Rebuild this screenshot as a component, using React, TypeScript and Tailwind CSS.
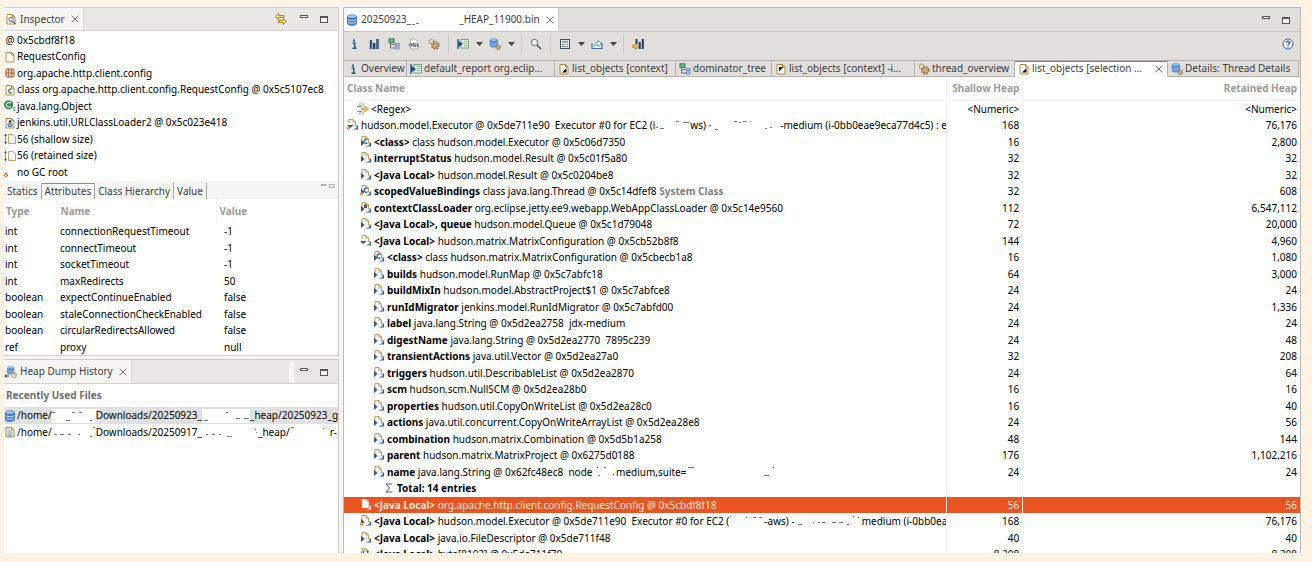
import type { ReactNode } from 'react';
import clsx from 'clsx';

type Mark = [x: number, y: number, w: number];
type Part = string | { mask: number; marks: Mark[] };
type NodeKind = 'object' | 'class' | 'loader' | 'array';

interface TreeRow {
  level: 0 | 1 | 2;
  kind?: NodeKind;
  open?: boolean;
  root?: boolean;
  selected?: boolean;
  field?: string;
  parts: Part[];
  note?: string;
  shallow: string;
  retained: string;
}

const treeRows: TreeRow[] = [
  {
    level: 0, open: true, root: true, shallow: '168', retained: '76,176',
    parts: [
      'hudson.model.Executor @ 0x5de711e90  Executor #0 for EC2 (i',
      { mask: 35, marks: [[1, 9, 2], [5, 10, 4], [21, 3, 3], [28, 4, 6]] },
      'ws) ·',
      { mask: 69, marks: [[4, 11, 3], [23, 3, 3], [28, 4, 2], [32, 3, 3], [39, 3, 1], [54, 10, 2], [59, 9, 2]] },
      '-medium (i-0bb0eae9eca77d4c5) : e',
    ],
  },
  { level: 1, kind: 'class', field: '<class>', parts: ['class hudson.model.Executor @ 0x5c06d7350'], shallow: '16', retained: '2,800' },
  { level: 1, field: 'interruptStatus', parts: ['hudson.model.Result @ 0x5c01f5a80'], shallow: '32', retained: '32' },
  { level: 1, field: '<Java Local>', parts: ['hudson.model.Result @ 0x5c0204be8'], shallow: '32', retained: '32' },
  { level: 1, kind: 'class', root: true, field: 'scopedValueBindings', parts: ['class java.lang.Thread @ 0x5c14dfef8'], note: 'System Class', shallow: '32', retained: '608' },
  { level: 1, kind: 'loader', field: 'contextClassLoader', parts: ['org.eclipse.jetty.ee9.webapp.WebAppClassLoader @ 0x5c14e9560'], shallow: '112', retained: '6,547,112' },
  { level: 1, field: '<Java Local>, queue', parts: ['hudson.model.Queue @ 0x5c1d79048'], shallow: '72', retained: '20,000' },
  { level: 1, open: true, field: '<Java Local>', parts: ['hudson.matrix.MatrixConfiguration @ 0x5cb52b8f8'], shallow: '144', retained: '4,960' },
  { level: 2, kind: 'class', field: '<class>', parts: ['class hudson.matrix.MatrixConfiguration @ 0x5cbecb1a8'], shallow: '16', retained: '1,080' },
  { level: 2, field: 'builds', parts: ['hudson.model.RunMap @ 0x5c7abfc18'], shallow: '64', retained: '3,000' },
  { level: 2, field: 'buildMixIn', parts: ['hudson.model.AbstractProject$1 @ 0x5c7abfce8'], shallow: '24', retained: '24' },
  { level: 2, field: 'runIdMigrator', parts: ['jenkins.model.RunIdMigrator @ 0x5c7abfd00'], shallow: '24', retained: '1,336' },
  { level: 2, field: 'label', parts: ['java.lang.String @ 0x5d2ea2758  jdx-medium'], shallow: '24', retained: '24' },
  { level: 2, field: 'digestName', parts: ['java.lang.String @ 0x5d2ea2770  7895c239'], shallow: '24', retained: '48' },
  { level: 2, field: 'transientActions', parts: ['java.util.Vector @ 0x5d2ea27a0'], shallow: '32', retained: '208' },
  { level: 2, field: 'triggers', parts: ['hudson.util.DescribableList @ 0x5d2ea2870'], shallow: '24', retained: '64' },
  { level: 2, field: 'scm', parts: ['hudson.scm.NullSCM @ 0x5d2ea28b0'], shallow: '16', retained: '16' },
  { level: 2, field: 'properties', parts: ['hudson.util.CopyOnWriteList @ 0x5d2ea28c0'], shallow: '16', retained: '40' },
  { level: 2, field: 'actions', parts: ['java.util.concurrent.CopyOnWriteArrayList @ 0x5d2ea28e8'], shallow: '24', retained: '56' },
  { level: 2, field: 'combination', parts: ['hudson.matrix.Combination @ 0x5d5b1a258'], shallow: '48', retained: '144' },
  { level: 2, field: 'parent', parts: ['hudson.matrix.MatrixProject @ 0x6275d0188'], shallow: '176', retained: '1,102,216' },
  {
    level: 2, field: 'name', shallow: '24', retained: '24',
    parts: [
      'java.lang.String @ 0x62fc48ec8  node ',
      { mask: 21, marks: [[2, 2, 1], [3, 10, 2], [9, 2, 2], [18, 9, 1]] },
      'medium,suite=',
      { mask: 90, marks: [[2, 2, 6], [78, 10, 5], [87, 2, 1]] },
    ],
  },
];

const tailRows: TreeRow[] = [
  { level: 1, selected: true, field: '<Java Local>', parts: ['org.apache.http.client.config.RequestConfig @ 0x5cbdf8f18'], shallow: '56', retained: '56' },
  {
    level: 1, root: true, field: '<Java Local>', shallow: '168', retained: '76,176',
    parts: [
      'hudson.model.Executor @ 0x5de711e90  Executor #0 for EC2 (',
      { mask: 35, marks: [[1, 2, 1], [17, 3, 1], [24, 3, 3], [30, 3, 3]] },
      '-aws) -',
      { mask: 67, marks: [[3, 10, 4], [18, 8, 1], [23, 8, 2], [27, 8, 3], [37, 8, 4], [44, 8, 4], [52, 10, 2], [58, 2, 1], [63, 3, 1]] },
      'medium (i-0bb0ea',
    ],
  },
  { level: 1, field: '<Java Local>', parts: ['java.io.FileDescriptor @ 0x5de711f48'], shallow: '40', retained: '40' },
  { level: 1, kind: 'array', field: '<Java Local>', parts: ['byte[8192] @ 0x5de711f70'], shallow: '8,208', retained: '8,208' },
];

const attributes = [
  ['int', 'connectionRequestTimeout', '-1'],
  ['int', 'connectTimeout', '-1'],
  ['int', 'socketTimeout', '-1'],
  ['int', 'maxRedirects', '50'],
  ['boolean', 'expectContinueEnabled', 'false'],
  ['boolean', 'staleConnectionCheckEnabled', 'false'],
  ['boolean', 'circularRedirectsAllowed', 'false'],
  ['ref', 'proxy', 'null'],
];

/* ---------- icons, all on a 12px grid ---------- */

const Icon = ({ children, size = 12 }: { children: ReactNode; size?: number }) => (
  <svg width={size} height={size} viewBox="0 0 12 12" fill="none" className="shrink-0" aria-hidden="true">
    {children}
  </svg>
);

const Page = ({ fill = '#fdfdf6' }: { fill?: string }) => (
  <path d="M2 1.5h5.5L10 4v7H2z M7.5 1.5V4H10" fill={fill} stroke="#b08d3c" />
);

const Cylinder = () => (
  <>
    <path d="M1.5 2.5v7c0 2.4 9 2.4 9 0v-7z" fill="#3f83d6" />
    <ellipse cx="6" cy="2.5" rx="4.5" ry="1.7" fill="#a9d0f7" stroke="#2f6cb8" strokeWidth=".7" />
    <path d="M1.5 5c0 2.2 9 2.2 9 0M1.5 7.5c0 2.2 9 2.2 9 0" stroke="#d6e9fc" strokeWidth=".9" />
    <path d="M1.5 2.5v7c0 2.4 9 2.4 9 0v-7" stroke="#2f6cb8" strokeWidth=".8" />
  </>
);

const DatabaseIcon = () => <Icon><Cylinder /></Icon>;

const InspectorIcon = () => (
  <Icon>
    <Page />
    <circle cx="6" cy="6.5" r="2.2" fill="#d9ecf7" stroke="#51616e" strokeWidth=".9" />
    <path d="M7.6 8.2l2.8 2.8" stroke="#555" strokeWidth="1.1" />
  </Icon>
);

const PageIcon = () => <Icon><Page /></Icon>;

const PackageIcon = () => (
  <Icon>
    <rect x="2" y="2" width="8" height="8" rx="1" fill="#efc4a3" stroke="#a8623a" />
    <path d="M4.500 1.500v9M7.500 1.500v9M1.500 6h9" stroke="#a8623a" strokeWidth=".8" />
  </Icon>
);

const ClassIcon = () => (
  <Icon>
    <Page />
    <path d="M7.8 5.4a2 2 0 1 0 0 3.2" stroke="#2766b5" strokeWidth="1.2" />
  </Icon>
);

const SuperclassIcon = () => (
  <Icon>
    <circle cx="4.600" cy="4.800" r="4.600" fill="#2f9150" />
    <path d="M6.600 3.300a2.400 2.400 0 1 0 0 3" stroke="#fff" strokeWidth="1.100" />
    <path d="M11.300 7.600c-2.600-.7-2.600 1.400-1 1.600s1.200 2-1.200 1.400" stroke="#2f9150" strokeWidth=".9" />
  </Icon>
);

const LoaderIcon = () => (
  <Icon>
    <Page />
    <rect x="4" y="6" width="4" height="3.5" rx="1" fill="#8fb8e4" stroke="#2a5c9c" strokeWidth=".8" />
    <circle cx="6" cy="4.4" r="1.2" fill="#333" />
  </Icon>
);

const SizeIcon = () => (
  <Icon>
    <path d="M1.500 1v10" stroke="#2b6ea5" strokeDasharray="1.500 .700" />
    <path d="M0 3l1.500-2L3 3zM0 9l1.500 2L3 9z" fill="#2b6ea5" />
    <path d="M4.500 1.500H9L11.500 4v6.500h-7z" fill="#f4f6fb" stroke="#b59a57" strokeWidth=".9" />
  </Icon>
);

const RootIcon = () => (
  <Icon>
    <circle cx="2" cy="9" r="1.600" fill="#f6c48f" stroke="#d2731d" />
  </Icon>
);

const InfoIcon = () => (
  <Icon>
    <path d="M4.500 5h2.300v5M4.500 10.200h4" stroke="#1d5c96" strokeWidth="1.500" />
    <rect x="5" y="1.500" width="2" height="2" fill="#1d5c96" />
  </Icon>
);

const HistogramIcon = () => (
  <Icon>
    <path d="M3 2v9M6.200 5v6M9.500 1v10" stroke="#1f3f6e" strokeWidth="2.400" />
    <path d="M3 2v9M9.500 1v10" stroke="#5c7fae" strokeWidth=".6" />
  </Icon>
);

const TreeIcon = () => (
  <Icon>
    <rect x="1" y=".8" width="5" height="3.600" fill="#6cbf8b" stroke="#23744a" strokeWidth=".9" />
    <path d="M2.500 4.500V10H7M2.500 6.500H7" stroke="#666" strokeWidth=".9" />
    <rect x="7.200" y="5.400" width="3.800" height="2" fill="#dce9f8" stroke="#4a7ab5" strokeWidth=".8" />
    <rect x="7.200" y="9" width="3.800" height="2" fill="#dce9f8" stroke="#4a7ab5" strokeWidth=".8" />
  </Icon>
);

const OqlIcon = () => (
  <Icon>
    <path d="M2.500 1h5L10 3.500V11H2.500z" fill="#f7f7f3" stroke="#a59a7b" strokeWidth=".8" />
    <rect x=".5" y="4.500" width="11" height="4.600" fill="#dbe0e8" />
    <circle cx="2.500" cy="6.800" r="1.300" stroke="#303c52" strokeWidth=".9" />
    <circle cx="6" cy="6.800" r="1.300" stroke="#303c52" strokeWidth=".9" />
    <path d="M7 8l.8.900M9.300 5v3.200h1.900" stroke="#303c52" strokeWidth=".9" />
  </Icon>
);

const GearShape = () => (
  <>
    <circle cx="7.300" cy="7.300" r="3.500" stroke="#93703f" strokeWidth="1.800" strokeDasharray="1.600 1.150" />
    <circle cx="7.300" cy="7.300" r="2.700" fill="#f2dcb4" stroke="#93703f" strokeWidth=".9" />
    <circle cx="7.300" cy="7.300" r="1" fill="#fff" stroke="#7d5a28" strokeWidth=".8" />
  </>
);

const GearsIcon = () => (
  <Icon>
    <circle cx="3.500" cy="3.500" r="2.300" fill="#efe0c5" stroke="#a58b62" strokeWidth="1.200" strokeDasharray="1.400 .800" />
    <GearShape />
  </Icon>
);

const ReportIcon = () => (
  <Icon>
    <path d="M1 1v10" stroke="#2c5d97" strokeWidth="1.400" />
    <rect x="4" y="1.500" width="7.500" height="8.500" fill="#e6f2e4" stroke="#5c9468" strokeWidth=".8" />
    <path d="M6.500 3.500h4M6.500 5.600h4M6.500 7.700h4" stroke="#7ba085" strokeWidth=".8" />
    <path d="M1 2.500l5 3.500-5 3.500z" fill="#1f4f8b" />
  </Icon>
);

const QueryIcon = () => (
  <Icon>
    <g transform="scale(.8)"><Cylinder /></g>
    <g transform="translate(4.600 4.600) scale(.64)"><GearShape /></g>
  </Icon>
);

const SearchIcon = () => (
  <Icon>
    <circle cx="4.500" cy="4.500" r="3.200" fill="#eef3f7" stroke="#6b6b6b" />
    <path d="M7 7l4 4" stroke="#4a4a4a" strokeWidth="1.500" />
  </Icon>
);

const CalculatorIcon = () => (
  <Icon>
    <rect x="1.500" y="1.500" width="9" height="9" fill="#fbfbfb" stroke="#46535e" />
    <rect x="2.800" y="2.800" width="6.400" height="1.800" fill="#67a58f" />
    <path d="M3 6.300h6.200M3 8.600h6.200" stroke="#46535e" strokeWidth="1.100" strokeDasharray="1.400 1" />
  </Icon>
);

const ExportIcon = () => (
  <Icon>
    <path d="M1 5v5.500h10V5" fill="#eaf2fb" stroke="#3e6fa8" strokeWidth="1.200" />
    <path d="M3 8.500C3 5.500 4.500 4.500 7 4.500V2.500l4 3-4 3v-2C5 6.500 4.200 7 3 8.500z" fill="#fff" stroke="#4e7fb8" strokeWidth=".8" />
  </Icon>
);

const CompareIcon = () => (
  <Icon>
    <path d="M4.500 1v5M7.700 4v7M10.800 1v10" stroke="#1f3f6e" strokeWidth="2.100" />
    <path d="M0 7.200h3.500V5l3.500 3.300L3.500 11.500V9.300H0z" fill="#f6c95f" stroke="#a87a16" strokeWidth=".7" />
  </Icon>
);

const HelpIcon = () => (
  <Icon>
    <circle cx="6" cy="6" r="5" fill="#f4f8fc" stroke="#35699e" />
    <path d="M4.300 4.800c0-2.300 3.500-2.200 3.500-.2C7.800 5.800 6 5.800 6 7.200M6 8.200v1.300" stroke="#24598f" strokeWidth="1.300" />
  </Icon>
);

const ListObjectsIcon = () => (
  <Icon>
    <Page fill="#fff" />
    <path d="M8.500 5v4.500H4z" fill="#111" />
  </Icon>
);

const IncomingIcon = () => (
  <Icon>
    <Page fill="#fff" />
    <path d="M4 4h4.500L4 8.500z" fill="#111" />
  </Icon>
);

const LinkIcon = () => (
  <Icon>
    <path d="M.5 3.500L3.700.5v2H9v2H3.700v2z" fill="#fbdc8b" stroke="#b47d12" strokeWidth=".9" />
    <path d="M11.500 8.500L8.300 5.500v2H3.500v2h4.800v2z" fill="#fbdc8b" stroke="#b47d12" strokeWidth=".9" />
  </Icon>
);

const HistoryIcon = () => (
  <Icon>
    <g transform="translate(1.500 0) scale(.7)"><Cylinder /></g>
    <path d="M0 10h4M1.500 8.500L0 10l1.500 1.500" stroke="#333" />
    <circle cx="9" cy="9" r="2.500" fill="#fff8e6" stroke="#ab7c2b" strokeWidth=".8" />
    <path d="M9 7.500V9h1.200" stroke="#555" strokeWidth=".8" />
  </Icon>
);

const TextFileIcon = () => (
  <Icon>
    <Page />
    <path d="M3.500 4h3M3.500 6h5M3.500 8h5M3.500 9.800h5" stroke="#5b83b6" strokeWidth=".9" />
  </Icon>
);

const RegexIcon = () => (
  <Icon>
    <path d="M0 3.500h5M0 8.500h5M3 0v4.500M6 0v3M3 7.500V12M6 9v3" stroke="#777" strokeWidth=".8" />
    <path d="M4.500 5.200h3.300V3.300L11.500 6 7.800 8.700V6.800H4.500z" fill="#ffd98a" stroke="#bd861e" strokeWidth=".8" />
  </Icon>
);

const CloseIcon = () => (
  <Icon size={10}>
    <path d="M2 2l8 8M10 2l-8 8" stroke="#666" strokeWidth="1.100" />
  </Icon>
);

const MinimizeIcon = () => (
  <Icon>
    <rect x="2.500" y="2.500" width="7" height="2" fill="#fff" stroke="#555" />
  </Icon>
);

const MaximizeIcon = () => (
  <Icon>
    <rect x="2.500" y="3.500" width="7" height="6" fill="#f4f4f4" stroke="#555" />
    <path d="M2 4.500h8" stroke="#555" />
  </Icon>
);

// Tree node: page with the reference arrow, plus the expander drawn on top of it
const NodeIcon = ({ kind = 'object', open, root, selected }: Pick<TreeRow, 'kind' | 'open' | 'root' | 'selected'>) => (
  <Icon>
    <path d="M2 0.500H6L8.500 3v6H2z" fill={selected ? '#f6f6f6' : '#eef2f8'} />
    <path d="M2 4V.5h4L8.500 3v4.500M6 .5V3h2.500" stroke={selected ? '#f8d9c8' : '#b8964a'} strokeWidth=".9" />
    <path d="M5.500 10.500H11V6.500H9.500V9z" fill={selected ? '#dfe8f3' : '#2a639f'} />
    {kind === 'class' && <path d="M7.400 3.600a2 2 0 1 0 0 3.200" stroke="#2766b5" strokeWidth="1.200" />}
    {kind === 'loader' && <rect x="4" y="2.500" width="3" height="3.500" fill="#555" />}
    {kind === 'array' && <path d="M4.500 3h-1v5h1M6.500 3h1v5h-1" stroke="#2766b5" />}
    {!selected && !open && <path d="M1 3.500l3.500 3.500L1 10z" fill="#4b5560" />}
    {open && <path d="M0 6h6.500L3.200 9z" fill="#4b5560" />}
    {root && <circle cx="1.500" cy="9" r="1.300" fill="#f6c48f" stroke="#d2731d" strokeWidth=".8" />}
  </Icon>
);

/* ---------- small pieces ---------- */

const IconButton = ({ label, children }: { label: string; children: ReactNode }) => (
  <button type="button" aria-label={label} className="flex h-5 w-5 shrink-0 items-center justify-center">
    {children}
  </button>
);

const Caret = ({ label }: { label: string }) => (
  <button type="button" aria-label={label} className="flex h-5 w-3 shrink-0 items-center justify-center">
    <svg width="7" height="4" viewBox="0 0 7 4" aria-hidden="true"><path d="M0 0h7L3.500 4z" fill="#444" /></svg>
  </button>
);

const Separator = () => <span className="mx-1 h-5 w-px shrink-0 bg-[#cdc9c5]" />;

// Blanked out part of a name, only a few strokes stay visible
const Mask = ({ width, marks }: { width: number; marks: Mark[] }) => (
  <svg width={width} height="14" viewBox={`0 0 ${width} 14`} className="inline-block shrink-0 bg-white" aria-hidden="true">
    {marks.map(([x, y, w]) => (
      <rect key={`${x}-${y}`} x={x} y={y} width={w} height="1" fill="#777" />
    ))}
  </svg>
);

const WindowButtons = () => (
  <div className="flex">
    <IconButton label="Minimize"><MinimizeIcon /></IconButton>
    <IconButton label="Maximize"><MaximizeIcon /></IconButton>
  </div>
);

const InspectorRow = ({ icon, children }: { icon: ReactNode; children: ReactNode }) => (
  <li className="flex h-4 items-center gap-px even:h-[17px]">
    {icon}
    <span>{children}</span>
  </li>
);

const ResultTab = ({ icon, width, active, children }: { icon: ReactNode; width: string; active?: boolean; children: ReactNode }) => (
  <button
    type="button"
    role="tab"
    aria-selected={!!active}
    className={clsx(
      'flex h-4 min-w-0 items-center gap-0.5 overflow-hidden border-r border-b border-[#b5b1ad] px-[3px] leading-[15px] whitespace-nowrap',
      width,
      active && 'border-b-white bg-white shadow-[inset_0_1px_0_#e95420]',
    )}
  >
    {icon}
    <span>{children}</span>
    {active && <span className="ml-auto"><CloseIcon /></span>}
  </button>
);

const TreeTableRow = ({ row }: { row: TreeRow }) => (
  <tr className={clsx('h-4 even:h-[17px]', row.selected && 'bg-[#e95420] text-[#fde9df]')}>
    <td className="overflow-hidden border-r border-[#f3f3f3] p-0">
      <div
        className={clsx(
          'flex h-4 items-center gap-0.5 whitespace-pre',
          row.level === 0 && 'pl-[3px]',
          row.level === 1 && 'pl-4',
          row.level === 2 && 'pl-[29px]',
        )}
      >
        <NodeIcon kind={row.kind} open={row.open} root={row.root} selected={row.selected} />
        <span className="flex items-center">
          {row.field && <b>{row.field} </b>}
          {row.parts.map((part, i) =>
            typeof part === 'string' ? <span key={i}>{part}</span> : <Mask key={i} width={part.mask} marks={part.marks} />,
          )}
          {row.note && <b className="text-[#7f7f7f]"> {row.note}</b>}
        </span>
      </div>
    </td>
    <td className="border-r border-[#f3f3f3] p-0 pr-[3px] text-right">{row.shallow}</td>
    <td className="p-0 pr-[3px] text-right">{row.retained}</td>
  </tr>
);

/* ---------- panels ---------- */

const InspectorPanel = () => (
  <section className="border border-l-0 border-[#cfccc9] bg-white">
    <div className="flex h-[23px] justify-between border-b border-[#d5d2cf] bg-[#e9e8e6]">
      <div className="flex items-center gap-[3px] border-r border-[#dad8d5] bg-[#f6f5f4] px-px text-[#3d3d3d]">
        <InspectorIcon />
        <span>Inspector</span>
        <button type="button" aria-label="Close Inspector" className="px-0.5"><CloseIcon /></button>
      </div>
      <div className="flex items-center gap-[3px] pr-1">
        <IconButton label="Link with snapshot"><LinkIcon /></IconButton>
        <WindowButtons />
      </div>
    </div>

    <ul className="h-[150px] pt-px">
      <InspectorRow icon={<span className="w-3 text-center">@</span>}>0x5cbdf8f18</InspectorRow>
      <InspectorRow icon={<PageIcon />}>RequestConfig</InspectorRow>
      <InspectorRow icon={<PackageIcon />}>org.apache.http.client.config</InspectorRow>
      <InspectorRow icon={<ClassIcon />}>class org.apache.http.client.config.RequestConfig @ 0x5c5107ec8</InspectorRow>
      <InspectorRow icon={<SuperclassIcon />}>java.lang.Object</InspectorRow>
      <InspectorRow icon={<LoaderIcon />}>jenkins.util.URLClassLoader2 @ 0x5c023e418</InspectorRow>
      <InspectorRow icon={<SizeIcon />}>56 (shallow size)</InspectorRow>
      <InspectorRow icon={<SizeIcon />}>56 (retained size)</InspectorRow>
      <InspectorRow icon={<RootIcon />}>no GC root</InspectorRow>
    </ul>

    <div className="flex items-end justify-between bg-[#f6f5f4] pt-0.5">
      <div role="tablist" className="flex h-4 leading-4 text-[#3d3d3d]">
        <button type="button" role="tab" aria-selected="false" className="border-r border-[#aaa] px-[3px]">Statics</button>
        <button type="button" role="tab" aria-selected="true" className="border-r border-[#aaa] bg-[#fbfbfa] px-[3px] shadow-[inset_0_1px_0_#8c8c8c]">Attributes</button>
        <button type="button" role="tab" aria-selected="false" className="border-r border-[#aaa] px-[3px]">Class Hierarchy</button>
        <button type="button" role="tab" aria-selected="false" className="border-r border-[#aaa] px-[3px]">Value</button>
      </div>
      <div className="flex self-start pr-0.5">
        <button type="button" aria-label="Minimize tabs"><Icon size={8}><rect x="2" y="2" width="7" height="2" stroke="#999" /></Icon></button>
        <button type="button" aria-label="Maximize tabs"><Icon size={8}><rect x="2" y="2" width="7" height="5" stroke="#999" /></Icon></button>
      </div>
    </div>

    <table className="w-full table-fixed border-collapse text-left">
      <thead>
        <tr className="h-6 text-[#9a9a9a]">
          <th className="w-[53px] border-r border-[#f0f0f0] p-0 pl-0.5 font-bold">Type</th>
          <th className="w-[159px] border-r border-[#f0f0f0] p-0 pl-[3px] font-bold">Name</th>
          <th className="p-0 pl-[3px] font-bold">Value</th>
        </tr>
      </thead>
      <tbody>
        {attributes.map(([type, name, value]) => (
          <tr key={name} className="h-4 leading-4 even:h-[17px]">
            <td className="p-0 pl-px">{type}</td>
            <td className="p-0 pl-[3px]">{name}</td>
            <td className="p-0 pl-2">{value}</td>
          </tr>
        ))}
      </tbody>
    </table>
  </section>
);

const HistoryPanel = () => (
  <section className="mt-[3px] flex min-h-0 flex-1 flex-col border border-b-0 border-l-0 border-[#cfccc9] bg-white">
    <div className="flex h-6 justify-between border-b border-[#d5d2cf] bg-[#e9e8e6]">
      <div className="flex items-center gap-[3px] border-r border-[#dad8d5] bg-[#f6f5f4] px-px text-[#3d3d3d]">
        <HistoryIcon />
        <span>Heap Dump History</span>
        <button type="button" aria-label="Close Heap Dump History" className="px-0.5"><CloseIcon /></button>
      </div>
      <div className="flex items-center pr-1">
        <span className="h-5 w-[5px] bg-[#f6f5f4]" />
        <WindowButtons />
      </div>
    </div>
    <h2 className="pl-0.5 leading-[23px] font-bold text-[#6e6e6e]">Recently Used Files</h2>
    <ul className="overflow-hidden whitespace-pre">
      <li className="flex h-[17px] items-center bg-[#e0e0e0]">
        <DatabaseIcon />
        <span className="flex items-center pl-px">
          /home/
          <Mask width={44} marks={[[0, 3, 3], [14, 11, 4], [20, 3, 3], [27, 3, 3], [38, 11, 2]]} />
          Downloads/20250923_
          <Mask width={48} marks={[[2, 11, 4], [24, 3, 2], [34, 9, 4], [42, 9, 5]]} />
          _heap/20250923_g
        </span>
      </li>
      <li className="flex h-4 items-center">
        <TextFileIcon />
        <span className="flex items-center pl-px">
          /home/
          <Mask width={44} marks={[[2, 9, 3], [8, 9, 4], [16, 9, 3], [26, 9, 2], [38, 11, 2], [41, 2, 2]]} />
          Downloads/20250917_
          <Mask width={56} marks={[[4, 9, 2], [10, 9, 3], [17, 9, 2], [25, 11, 5], [53, 4, 1], [54, 7, 1]]} />
          _heap/
          <Mask width={40} marks={[[1, 2, 3], [33, 3, 1]]} />
          r-
        </span>
      </li>
    </ul>
  </section>
);

const EditorPanel = () => (
  <main className="flex min-w-0 flex-1 flex-col border border-b-0 border-[#bdb9b6] bg-[#e1dedb]">
    <div className="flex h-6 justify-between border-b border-[#cbc7c4]">
      <div className="flex items-center gap-[3px] border-r border-[#cbc7c4] bg-white pr-px pl-0.5 text-[#3d3d3d]">
        <DatabaseIcon />
        <span className="flex items-center whitespace-pre">
          20250923_
          <Mask width={48} marks={[[1, 11, 3], [5, 10, 3]]} />
          _HEAP_11900.bin
        </span>
        <button type="button" aria-label="Close editor" className="px-0.5"><CloseIcon /></button>
      </div>
      <div className="flex items-center pr-1"><WindowButtons /></div>
    </div>

    <div className="flex h-7 items-center pb-1">
      <IconButton label="Overview"><InfoIcon /></IconButton>
      <IconButton label="Histogram"><HistogramIcon /></IconButton>
      <IconButton label="Dominator tree"><TreeIcon /></IconButton>
      <IconButton label="OQL"><OqlIcon /></IconButton>
      <IconButton label="Thread overview"><GearsIcon /></IconButton>
      <Separator />
      <IconButton label="Run report"><ReportIcon /></IconButton>
      <Caret label="Report menu" />
      <IconButton label="Open query browser"><QueryIcon /></IconButton>
      <Caret label="Query menu" />
      <Separator />
      <IconButton label="Find object"><SearchIcon /></IconButton>
      <Separator />
      <IconButton label="Calculate retained size"><CalculatorIcon /></IconButton>
      <Caret label="Calculate menu" />
      <IconButton label="Export"><ExportIcon /></IconButton>
      <Caret label="Export menu" />
      <Separator />
      <IconButton label="Compare"><CompareIcon /></IconButton>
      <div className="ml-auto pr-0.5"><IconButton label="Help"><HelpIcon /></IconButton></div>
    </div>

    <div role="tablist" className="flex border-t border-[#b5b1ad] pr-px text-[#3d3d3d]">
      <ResultTab width="w-[63px]" icon={<InfoIcon />}>Overview</ResultTab>
      <ResultTab width="w-[148px]" icon={<ReportIcon />}>default_report org.eclip...</ResultTab>
      <ResultTab width="w-[121px]" icon={<ListObjectsIcon />}>list_objects [context]</ResultTab>
      <ResultTab width="w-[96px]" icon={<TreeIcon />}>dominator_tree</ResultTab>
      <ResultTab width="w-[143px]" icon={<IncomingIcon />}>list_objects [context] -i...</ResultTab>
      <ResultTab width="w-[100px]" icon={<GearsIcon />}>thread_overview</ResultTab>
      <ResultTab width="w-[153px]" icon={<ListObjectsIcon />} active>list_objects [selection ...</ResultTab>
      <ResultTab width="w-[131px]" icon={<QueryIcon />}>Details: Thread Details</ResultTab>
    </div>

    <div className="min-h-0 flex-1 overflow-hidden bg-white">
      <table className="w-full table-fixed border-collapse leading-4">
        <thead>
          <tr className="h-[23px] border-b border-[#f3f3f3] text-[#9a9a9a]">
            <th className="w-[63%] border-r border-[#f3f3f3] p-0 pl-[3px] text-left font-bold">Class Name</th>
            <th className="w-[8%] border-r border-[#f3f3f3] p-0 pr-[3px] text-right font-bold">Shallow Heap</th>
            <th className="p-0 pr-[3px] text-right font-bold">Retained Heap</th>
          </tr>
        </thead>
        <tbody>
          <tr className="h-4">
            <td className="border-r border-[#f3f3f3] p-0">
              <div className="flex h-4 items-center gap-0.5 pl-[13px]"><RegexIcon />&lt;Regex&gt;</div>
            </td>
            <td className="border-r border-[#f3f3f3] p-0 pr-[3px] text-right">&lt;Numeric&gt;</td>
            <td className="p-0 pr-[3px] text-right">&lt;Numeric&gt;</td>
          </tr>
          {treeRows.map((row, i) => <TreeTableRow key={i} row={row} />)}
          <tr className="h-4 even:h-[17px]">
            <td className="border-r border-[#f3f3f3] p-0">
              <div className="flex h-4 items-center gap-0.5 pl-[39px]">
                <Icon><path d="M9 2H3l3.500 4L3 10h6.500" stroke="#41618b" /></Icon>
                <b>Total: 14 entries</b>
              </div>
            </td>
            <td className="border-r border-[#f3f3f3] p-0" />
            <td className="p-0" />
          </tr>
          {tailRows.map((row, i) => <TreeTableRow key={i} row={row} />)}
        </tbody>
      </table>
    </div>
  </main>
);

export default function App() {
  return (
    <div className="h-screen overflow-hidden bg-[#fef2e2] pt-[3px] pr-[11px] pb-[9px] pl-1 font-['Noto_Sans','Open_Sans',sans-serif] text-[10px] text-black">
      <div className="flex h-full gap-1 bg-[#f6f5f4] pt-1">
        <aside className="flex w-[335px] shrink-0 flex-col overflow-hidden">
          <InspectorPanel />
          <HistoryPanel />
        </aside>
        <EditorPanel />
      </div>
    </div>
  );
}
